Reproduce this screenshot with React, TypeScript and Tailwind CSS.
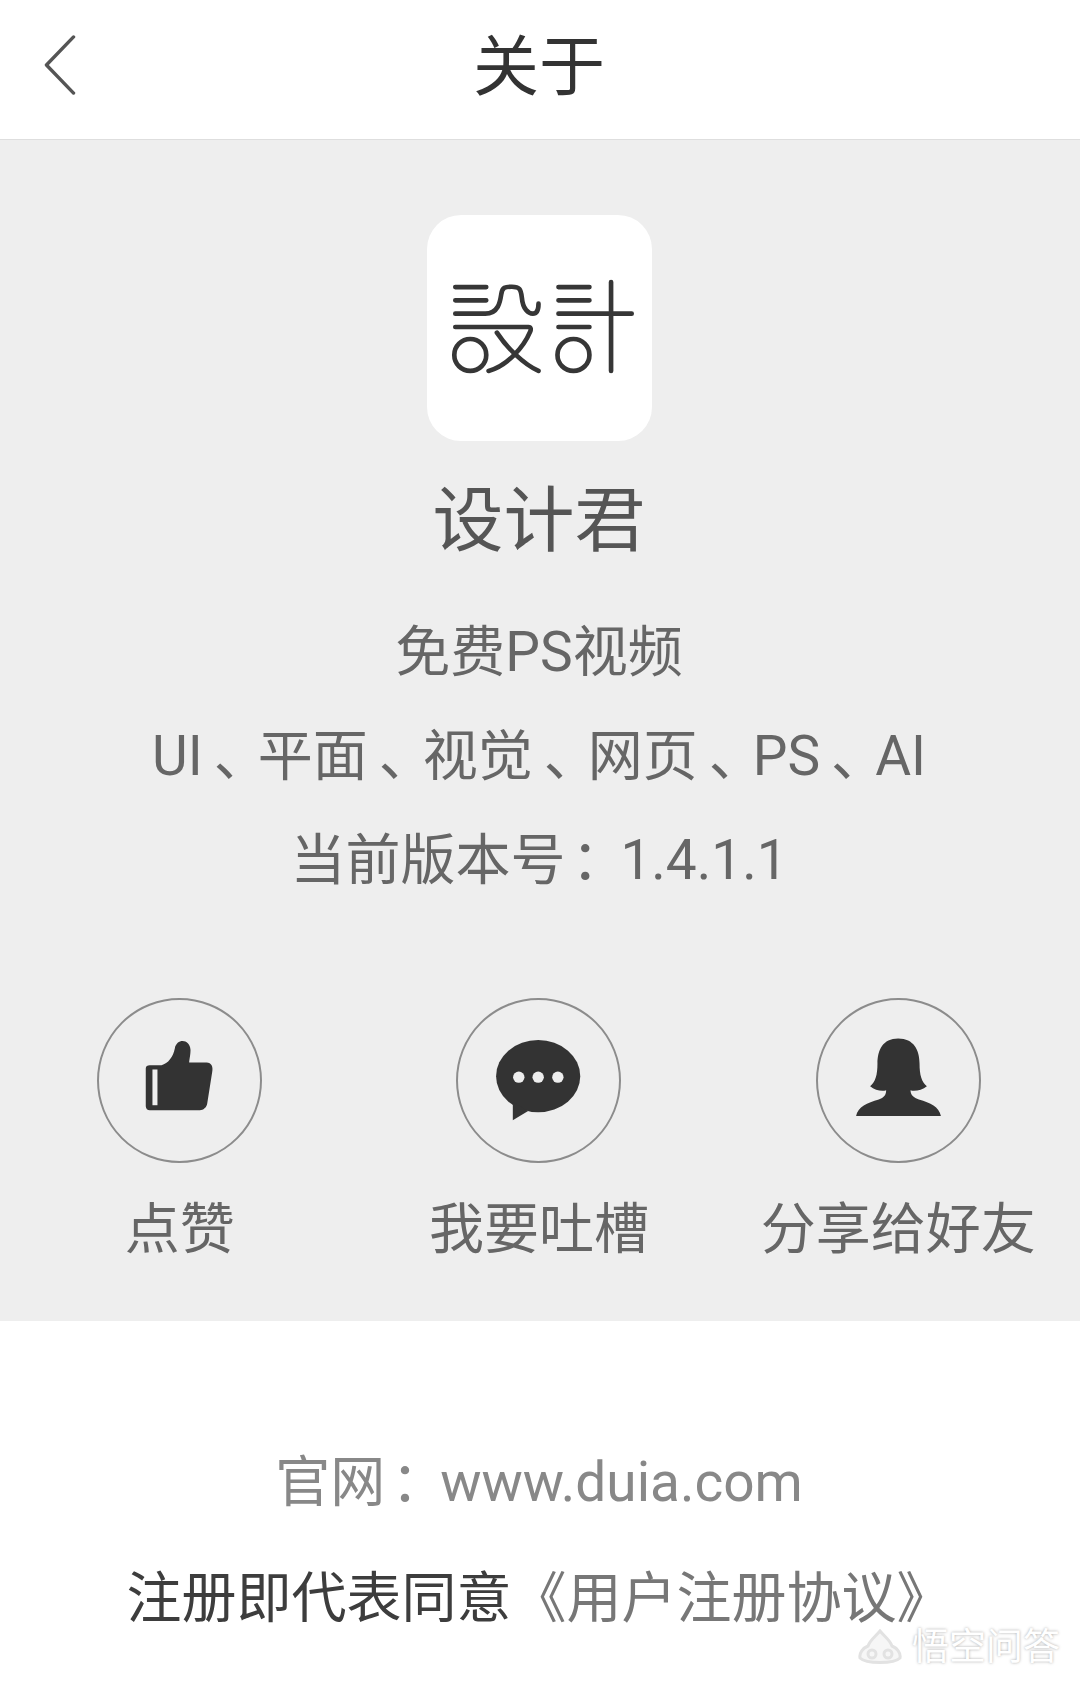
const font = "font-['Roboto','Noto_Sans_CJK_SC',sans-serif]"

function Logo() {
    return (
        <svg viewBox="80 42 676 678" className="h-[226px] w-[225px]" fill="none" stroke="#363636" strokeWidth="14" strokeLinecap="round" strokeLinejoin="round">
            <path d="M165 258H258M165 298H258" />
            <path d="M165 338H255C295 338 300 300 303 280C306 258 315 257 335 257C358 257 362 265 365 290C368 325 385 338 398 338C412 338 415 320 415 308" />
            <path d="M165 378H385C392 378 393 385 390 392C370 440 320 495 265 510" />
            <path d="M290 395C320 440 370 490 415 510" />
            <circle cx="210" cy="462" r="48" />
            <path d="M475 258H568M475 298H568M475 338H695M475 378H568M633 243V510" />
            <circle cx="520" cy="462" r="48" />
        </svg>
    )
}

function ThumbIcon() {
    return (
        <>
            <path d="M210 255H245C265 250 280 230 285 205C290 175 330 175 332 210C332 225 328 240 328 247H380C395 247 400 260 397 275L382 370C380 382 370 390 360 390H210C203 390 198 385 198 378V265C198 258 203 255 210 255Z" fill="#333" />
            <rect x="218" y="268" width="15" height="107" fill="#eee" />
        </>
    )
}

function ChatIcon() {
    return (
        <>
            <ellipse cx="298" cy="288" rx="126" ry="108" fill="#333" />
            <path d="M222 365V420L268 392Z" fill="#333" />
            <circle cx="240" cy="291" r="17" fill="#eee" />
            <circle cx="298" cy="291" r="17" fill="#eee" />
            <circle cx="357" cy="291" r="17" fill="#eee" />
        </>
    )
}

function PersonIcon() {
    return (
        <path d="M298 175C345 175 362 210 362 250C362 285 368 305 384 318C370 330 345 335 335 330C335 345 345 352 360 358C395 368 420 380 426 407H172C178 380 205 368 240 358C255 352 262 345 262 330C250 335 228 330 214 318C230 305 236 285 236 250C236 210 252 175 298 175Z" fill="#333" />
    )
}

const actions = [
    { label: '点赞', icon: <ThumbIcon /> },
    { label: '我要吐槽', icon: <ChatIcon /> },
    { label: '分享给好友', icon: <PersonIcon /> },
]

// punctuation sits nearer the middle of its cell in the reference font
const Dun = () => <span className="ml-[11px] tracking-[-11px]">、</span>
const Colon = () => <span className="ml-[6px] tracking-[-6px]">：</span>

export default function App() {
    return (
        <div className={`relative flex min-h-[1688px] w-[1080px] flex-col bg-white ${font}`}>
            <header className="grid h-[140px] grid-cols-[1fr_auto_1fr] items-center border-b border-[#dedede] bg-white pr-[2px] pb-[4px]">
                <svg viewBox="0 0 32 62" className="mb-[6px] ml-[44px] h-[60px] w-[32px]" fill="none" stroke="#555" strokeWidth="3.5" strokeLinecap="round" strokeLinejoin="round">
                    <path d="M30 2L2 31L30 60" />
                </svg>
                <h1 className="text-[66px] leading-[80px] font-normal text-[#333]">关于</h1>
            </header>

            <section className="flex h-[1181px] flex-col items-center bg-[#eeeeee] pt-[75px] pr-[2px]">
                <div className="rounded-[34px] bg-white">
                    <Logo />
                </div>
                <h2 className="mt-[40px] text-[71px] leading-[80px] font-normal text-[#555]">设计君</h2>
                <div className="mt-[39px] text-center text-[55px] leading-[104px] text-[#666]">
                    <p>免费PS视频</p>
                    <p>UI<Dun />平面<Dun />视觉<Dun />网页<Dun />PS<Dun />AI</p>
                    <p>当前版本号<Colon />1.4.1.1</p>
                </div>
                <div className="mt-[86px] grid w-full grid-cols-3">
                    {actions.map(action => (
                        <div key={action.label} className="flex flex-col items-center">
                            <div className="h-[165px] w-[165px] rounded-full border-2 border-[#8c8c8c]">
                                <svg viewBox="52 54 494 494" className="-m-[2px] h-[165px] w-[165px]">
                                    {action.icon}
                                </svg>
                            </div>
                            <span className="mt-[26px] text-[55px] leading-[80px] whitespace-nowrap text-[#666]">{action.label}</span>
                        </div>
                    ))}
                </div>
            </section>

            <footer className="flex flex-col items-center pt-[103px] pr-[2px] text-[55px] leading-[116px]">
                <p className="text-[#888]">官网<Colon />www.duia.com</p>
                <p className="text-[#3d3d3d]">注册即代表同意<span className="text-[#777]">《用户注册协议》</span></p>
            </footer>

            {/* watermark */}
            <div className="absolute top-[1628px] left-[858px] flex items-center gap-[10px] text-[37px] leading-[40px] text-white [text-shadow:0_0_3px_#a8a8a8]">
                <svg viewBox="0 0 44 38" className="h-[38px] w-[44px]" fill="none" stroke="#e2e2e2" strokeWidth="3">
                    <path d="M22 2C17 8 12 11 10 17C5 19 1 24 2 29C8 35 36 35 42 29C43 24 39 19 34 17C32 11 27 8 22 2Z" fill="#f6f6f6" />
                    <circle cx="14" cy="25" r="4" />
                    <circle cx="30" cy="25" r="4" />
                </svg>
                <span>悟空问答</span>
            </div>
        </div>
    )
}
